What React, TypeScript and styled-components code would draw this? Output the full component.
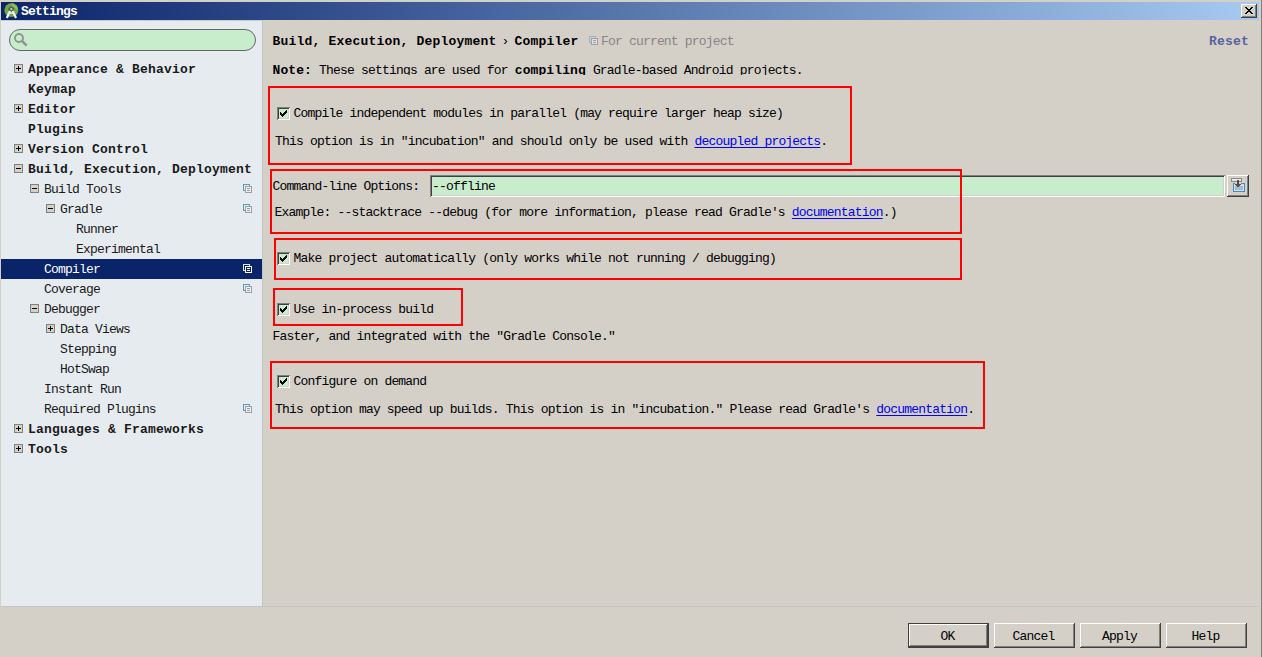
import React from "react";
import styled, { createGlobalStyle, css } from "styled-components";

const face = "#d4d0c8";
const green = "#c7edcc";
const navy = "#0a246a";

const GlobalStyle = createGlobalStyle`
  * { box-sizing: border-box; }
  html, body { margin: 0; padding: 0; }
  body {
    background: ${face};
    color: #000;
    font-family: "Liberation Mono", "Courier New", monospace;
    font-size: 13px;
    letter-spacing: -0.81px;
    overflow: hidden;
  }
  svg { display: block; flex: none; }
`;

const Window = styled.div`
  position: relative;
  display: flex;
  flex-direction: column;
  width: 1262px;
  height: 657px;
  padding: 2px 0 0 1px;
  border-right: 1px solid #808080;
  background: ${face};
  white-space: pre;
`;

const TitleBar = styled.header`
  display: flex;
  align-items: center;
  flex: none;
  height: 18px;
  margin-right: 2px;
  padding: 0 2px 0 3px;
  background: linear-gradient(90deg, ${navy}, #a6caf0);
`;

const Title = styled.span`
  flex: 1;
  margin-left: 2px;
  padding-top: 1px;
  color: #fff;
  font-weight: bold;
  line-height: 16px;
`;

const CloseButton = styled.button`
  display: flex;
  align-items: center;
  justify-content: center;
  width: 16px;
  height: 14px;
  padding: 0 0 1px;
  border: 0;
  background: ${face};
  box-shadow: inset -1px -1px #404040, inset 1px 1px #fff, inset -2px -2px #808080;
`;

const Body = styled.div`
  display: flex;
  flex: none;
  height: 587px;
  margin-right: 2px;
  border-bottom: 1px solid #c5c5c5;
`;

const Sidebar = styled.aside`
  width: 262px;
  flex: none;
  padding-top: 9px;
  border-top: 1px solid #c9cbcb;
  border-right: 1px solid #c0c3c6;
  background: #e6ebf0;
`;

const SearchField = styled.div`
  display: flex;
  align-items: center;
  width: 247px;
  height: 22px;
  margin: -1px 0 8px 8px;
  padding-left: 4px;
  border: 1px solid #666;
  border-radius: 11px;
  background: ${green};
`;

const TreeRow = styled.div<{ $level: number; $selected?: boolean }>`
  display: flex;
  align-items: center;
  height: 20px;
  padding: 0 10px 0 ${(p) => 13 + p.$level * 16}px;
  color: #1a1a1a;
  svg { margin-bottom: 1px; }
  ${(p) =>
    p.$selected &&
    css`
      background: ${navy};
      color: #fff;
    `}
`;

const ToggleSlot = styled.span`
  width: 14px;
  flex: none;
`;

const RowLabel = styled.span<{ $bold?: boolean }>`
  flex: 1;
  ${(p) =>
    p.$bold &&
    css`
      font-weight: bold;
      letter-spacing: 0.2px;
    `}
`;

const Content = styled.main`
  display: flex;
  flex-direction: column;
  flex: 1;
  padding: 11px 10px 0 9.5px;
`;

const Header = styled.div`
  display: flex;
  align-items: center;
  height: 20px;
`;

const Crumb = styled.span`
  font-weight: bold;
  letter-spacing: 0.2px;
`;

const CrumbArrow = styled.span`
  width: 18px;
  padding-left: 5px;
`;

const Scope = styled.span`
  display: flex;
  align-items: center;
  gap: 3px;
  flex: 1;
  margin-left: 10.4px;
  color: #868686;
  svg { margin-bottom: 1px; }
`;

const Reset = styled.a`
  color: #5863a0;
  font-weight: bold;
  letter-spacing: 0.2px;
`;

const Note = styled.p`
  height: 14px;
  margin: 10px 0 0;
  line-height: 20px;
  overflow: hidden;
  b { letter-spacing: 0.1px; }
`;

const Line = styled.div<{ $top: number; $indent?: number }>`
  display: flex;
  align-items: center;
  flex: none;
  height: 20px;
  margin-top: ${(p) => p.$top}px;
  padding-left: ${(p) => p.$indent ?? 0}px;
`;

const Link = styled.a`
  color: #0000f0;
  text-decoration: underline 1px;
  text-underline-offset: 2px;
  text-decoration-skip-ink: none;
`;

const CheckLabel = styled.label`
  display: flex;
  align-items: center;
  gap: 3.5px;
`;

const Box = styled.span`
  display: flex;
  align-items: center;
  justify-content: center;
  width: 13px;
  height: 13px;
  margin-top: 1px;
  background: ${green};
  box-shadow: inset 1px 1px #808080, inset -1px -1px #fff, inset 2px 2px #404040, inset -2px -2px ${face};
`;

const OptionsRow = styled.div`
  display: flex;
  align-items: center;
  height: 22px;
  margin-top: 24px;
`;

const OptionsLabel = styled.span`
  width: 157.5px;
  padding-top: 1px;
  line-height: 22px;
`;

const TextInput = styled.div`
  flex: 1;
  height: 22px;
  padding-left: 2px;
  line-height: 24px;
  background: ${green};
  box-shadow: inset 1px 1px #808080, inset -1px -1px #fff, inset 2px 2px #404040, inset -2px -2px ${face};
`;

const IconButton = styled.button`
  display: flex;
  align-items: center;
  justify-content: center;
  width: 22px;
  height: 22px;
  margin-left: 2px;
  padding: 0 0 2px;
  border: 0;
  background: ${face};
  box-shadow: inset -1px -1px #404040, inset 1px 1px #fff, inset -2px -2px #808080;
`;

const Footer = styled.footer`
  display: flex;
  justify-content: flex-end;
  gap: 5px;
  padding: 16px 14px 0 0;
`;

const PushButton = styled.button<{ $primary?: boolean }>`
  width: 81px;
  height: 25px;
  padding: 1px 2px 0 0;
  border: 0;
  background: ${face};
  color: #000;
  font: inherit;
  letter-spacing: inherit;
  box-shadow: ${(p) =>
    p.$primary
      ? "inset 0 0 0 1px #404040, inset -2px -2px #404040, inset 2px 2px #fff, inset -3px -3px #808080"
      : "inset -1px -1px #404040, inset 1px 1px #fff, inset -2px -2px #808080"};
`;

/* Red callout frames drawn on top of the settings page. */
const Callout = styled.div<{ $x: number; $y: number; $w: number; $h: number }>`
  position: absolute;
  left: ${(p) => p.$x}px;
  top: ${(p) => p.$y}px;
  width: ${(p) => p.$w}px;
  height: ${(p) => p.$h}px;
  border: 2px solid #f00;
  pointer-events: none;
`;

const StudioIcon = () => (
  <svg width="15" height="16" viewBox="0 0 15 16">
    <circle cx="7.3" cy="7.2" r="6.9" fill="#72a847" />
    <path d="M7.3 .3a6.9 6.9 0 0 1 6.9 6.9L9 4z" fill="#8cc05c" />
    <path d="M4.200 6.500a3.100 3.100 0 0 1 6.200 0l-1 2H5.200z" fill="#59635a" />
    <circle cx="7.3" cy="6" r="1.100" fill="#c5dcc0" />
    <path d="M6 8L2.800 15M8.700 8L12 15" stroke="#f4f6f4" strokeWidth="2.200" />
    <path d="M4 11q3.300-2 6.700 0" stroke="#e4e9e4" strokeWidth="1.300" fill="none" />
  </svg>
);

const SearchIcon = () => (
  <svg width="14" height="14" viewBox="0 0 14 14" fill="none" stroke="#8f9690">
    <circle cx="5" cy="5" r="4" strokeWidth="1.900" />
    <path d="M8 8l4.700 4.700" strokeWidth="2.500" />
  </svg>
);

/* Two overlapping sheets, built from whole-pixel cells. */
const CopyIcon = ({ selected, faded }: { selected?: boolean; faded?: boolean }) => {
  const back = selected ? "#dce6f4" : faded ? "#94b8ca" : "#5c9cc0";
  const front = selected ? "#fff" : "#a0a0a0";
  const fill = selected ? navy : faded ? "#e2e0dc" : "#edf0f2";
  return (
    <svg width="9" height="9" viewBox="0 0 9 9" shapeRendering="crispEdges">
      <path d="M0 0h7v1H1v5h1v1H0zM6 1h1v1H6z" fill={back} />
      <path d="M2 2h7v7H2z" fill={front} />
      <path d="M3 3h5v5H3z" fill={fill} />
      <path d="M4 4h3v1H4zM4 6h3v1H4z" fill={front} />
    </svg>
  );
};

const ToggleIcon = ({ open }: { open: boolean }) => (
  <svg width="9" height="9" viewBox="0 0 9 9" shapeRendering="crispEdges">
    <path d="M0 0h9v9H0z" fill="#808080" />
    <path d="M1 1h7v7H1z" fill={face} />
    <path d={open ? "M2 4h5v1H2z" : "M2 4h5v1H2zM4 2h1v5H4z"} />
  </svg>
);

const CheckIcon = () => (
  <svg width="7" height="7" viewBox="0 0 7 7" shapeRendering="crispEdges">
    <path d="M0 2h1v1h1v1h1V3h1V2h1V1h1V0h1v3H6v1H5v1H4v1H3v1H2V6H1V5H0z" />
  </svg>
);

const InsertIcon = () => (
  <svg width="14" height="14" viewBox="0 0 14 14" shapeRendering="crispEdges">
    <path d="M0 0h11v4H0z" fill="#8c8c8c" />
    <path d="M1 1h9v2H1z" fill="#e8e6e2" />
    <path d="M2 5h12v9H2z" fill="#3c92c8" />
    <path d="M3 6h10v7H3z" fill="#d6dde0" />
    <path d="M4 8h8v4H4z" fill="#a4bccb" />
    <path d="M4 4h6v2H4z" fill={face} />
    <path d="M6 2h2v4h2v1H9v1H8v1H6V8H5V7H4V6h2z" fill="#505050" />
  </svg>
);

const Check = ({ children }: { children: React.ReactNode }) => (
  <CheckLabel>
    <Box>
      <CheckIcon />
    </Box>
    <span>{children}</span>
  </CheckLabel>
);

type Node = {
  label: string;
  level: number;
  open?: boolean;
  selected?: boolean;
  project?: boolean;
};

const tree: Node[] = [
  { label: "Appearance & Behavior", level: 0, open: false },
  { label: "Keymap", level: 0 },
  { label: "Editor", level: 0, open: false },
  { label: "Plugins", level: 0 },
  { label: "Version Control", level: 0, open: false },
  { label: "Build, Execution, Deployment", level: 0, open: true },
  { label: "Build Tools", level: 1, open: true, project: true },
  { label: "Gradle", level: 2, open: true, project: true },
  { label: "Runner", level: 3 },
  { label: "Experimental", level: 3 },
  { label: "Compiler", level: 1, selected: true, project: true },
  { label: "Coverage", level: 1, project: true },
  { label: "Debugger", level: 1, open: true },
  { label: "Data Views", level: 2, open: false },
  { label: "Stepping", level: 2 },
  { label: "HotSwap", level: 2 },
  { label: "Instant Run", level: 1 },
  { label: "Required Plugins", level: 1, project: true },
  { label: "Languages & Frameworks", level: 0, open: false },
  { label: "Tools", level: 0, open: false },
];

export default function App() {
  return (
    <>
      <GlobalStyle />
      <Window>
        <TitleBar>
          <StudioIcon />
          <Title>Settings</Title>
          <CloseButton aria-label="Close">
            <svg width="8" height="7" viewBox="0 0 8 7" shapeRendering="crispEdges">
              <path d="M0 0h2v1h1v1h2V1h1V0h2v1H7v1H6v1H5v1h1v1h1v1h1v1H6V6H5V5H3v1H2v1H0V6h1V5h1V4h1V3H2V2H1V1H0z" />
            </svg>
          </CloseButton>
        </TitleBar>

        <Body>
          <Sidebar>
            <SearchField>
              <SearchIcon />
            </SearchField>
            {tree.map((n) => (
              <TreeRow key={n.label} $level={n.level} $selected={n.selected}>
                <ToggleSlot>{n.open !== undefined && <ToggleIcon open={n.open} />}</ToggleSlot>
                <RowLabel $bold={n.level === 0}>{n.label}</RowLabel>
                {n.project && <CopyIcon selected={n.selected} />}
              </TreeRow>
            ))}
          </Sidebar>

          <Content>
            <Header>
              <Crumb>Build, Execution, Deployment</Crumb>
              <CrumbArrow>›</CrumbArrow>
              <Crumb>Compiler</Crumb>
              <Scope>
                <CopyIcon faded />
                For current project
              </Scope>
              <Reset>Reset</Reset>
            </Header>
            <Note>
              <b>Note:</b> These settings are used for <b>compiling</b> Gradle-based Android projects.
            </Note>

            <Line $top={28} $indent={4.5}>
              <Check>Compile independent modules in parallel (may require larger heap size)</Check>
            </Line>
            <Line $top={8} $indent={2.5}>
              This option is in "incubation" and should only be used with <Link>decoupled projects</Link>.
            </Line>

            <OptionsRow>
              <OptionsLabel>Command-line Options:</OptionsLabel>
              <TextInput>--offline</TextInput>
              <IconButton aria-label="Insert">
                <InsertIcon />
              </IconButton>
            </OptionsRow>
            <Line $top={5} $indent={2}>
              Example: --stacktrace --debug (for more information, please read Gradle's <Link>documentation</Link>.)
            </Line>

            <Line $top={26} $indent={4.5}>
              <Check>Make project automatically (only works while not running / debugging)</Check>
            </Line>
            <Line $top={31} $indent={4.5}>
              <Check>Use in-process build</Check>
            </Line>
            <Line $top={7}>Faster, and integrated with the "Gradle Console."</Line>
            <Line $top={25} $indent={4.5}>
              <Check>Configure on demand</Check>
            </Line>
            <Line $top={8} $indent={2.5}>
              This option may speed up builds. This option is in "incubation." Please read Gradle's{" "}
              <Link>documentation</Link>.
            </Line>
          </Content>
        </Body>

        <Footer>
          <PushButton $primary>OK</PushButton>
          <PushButton>Cancel</PushButton>
          <PushButton>Apply</PushButton>
          <PushButton>Help</PushButton>
        </Footer>

        <Callout $x={268} $y={86} $w={584} $h={79} />
        <Callout $x={270} $y={169} $w={692} $h={65} />
        <Callout $x={274} $y={238} $w={688} $h={42} />
        <Callout $x={273} $y={288} $w={190} $h={38} />
        <Callout $x={270} $y={361} $w={715} $h={68} />
      </Window>
    </>
  );
}
